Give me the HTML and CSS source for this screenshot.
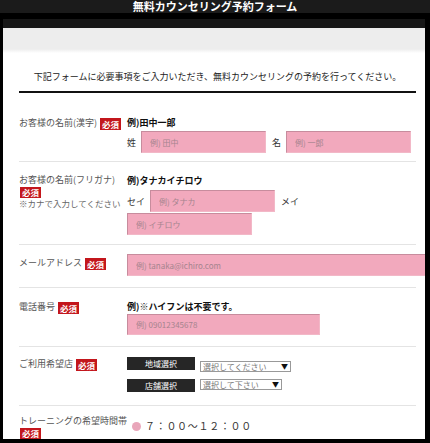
FILE: index.html
```html
<!DOCTYPE html>
<html lang="ja">
<head>
    <meta charset="UTF-8">
    <meta name="viewport" content="width=device-width, initial-scale=1.0">
    <title>無料カウンセリング予約フォーム</title>
    <link rel="stylesheet" href="styles.css">
</head>
<body>
    <div class="topbar">
        <h1>無料カウンセリング予約フォーム</h1>
    </div>

    <div class="frame">
        <div class="subbar"></div>
        <div class="panel">
            <div class="band"></div>
            <p class="intro">下記フォームに必要事項をご入力いただき、無料カウンセリングの予約を行ってください。</p>

            <form class="form" id="counseling-form">
                <!-- 名前(漢字) -->
                <div class="row row-name">
                    <div class="label">お客様の名前(漢字)<span class="req">必須</span></div>
                    <div class="field">
                        <p class="example">例)田中一郎</p>
                        <div class="inline">
                            <span class="unit">姓</span>
                            <input type="text" class="text name" placeholder="例) 田中">
                            <span class="unit unit-mei">名</span>
                            <input type="text" class="text name" placeholder="例) 一郎">
                        </div>
                    </div>
                </div>

                <!-- 名前(フリガナ) -->
                <div class="row row-kana">
                    <div class="label">
                        <span class="line">お客様の名前(フリガナ)</span>
                        <span class="req req-block">必須</span>
                        <span class="line note">※カナで入力してください</span>
                    </div>
                    <div class="field">
                        <p class="example">例)タナカイチロウ</p>
                        <div class="inline wrap">
                            <span class="unit">セイ</span>
                            <input type="text" class="text name" placeholder="例) タナカ">
                            <span class="unit unit-mei">メイ</span>
                            <input type="text" class="text name" placeholder="例) イチロウ">
                        </div>
                    </div>
                </div>

                <!-- メール -->
                <div class="row row-mail">
                    <div class="label label-mid">メールアドレス<span class="req">必須</span></div>
                    <div class="field">
                        <input type="text" class="text mail" placeholder="例) tanaka@ichiro.com">
                    </div>
                </div>

                <!-- 電話 -->
                <div class="row row-tel">
                    <div class="label">電話番号<span class="req">必須</span></div>
                    <div class="field">
                        <p class="example">例)※ハイフンは不要です。</p>
                        <input type="text" class="text tel" placeholder="例) 09012345678">
                    </div>
                </div>

                <!-- 店舗 -->
                <div class="row row-shop">
                    <div class="label">ご利用希望店<span class="req">必須</span></div>
                    <div class="field">
                        <div class="pick">
                            <span class="btn">地域選択</span>
                            <span class="select select-area">選択してください<span class="arrow">▼</span></span>
                        </div>
                        <div class="pick">
                            <span class="btn">店舗選択</span>
                            <span class="select select-shop">選択して下さい<span class="arrow">▼</span></span>
                        </div>
                    </div>
                </div>

                <!-- 時間帯 -->
                <div class="row row-time">
                    <div class="label">
                        <span class="line">トレーニングの希望時間帯</span>
                        <span class="req req-block">必須</span>
                    </div>
                    <div class="field">
                        <label class="option"><span class="radio"></span>７：００～１２：００</label>
                        <label class="option"><span class="radio"></span>１３：００～１８：００</label>
                    </div>
                </div>
            </form>
        </div>
    </div>
</body>
</html>
```

FILE: styles.css
```css
/* base */
body {
    margin: 0;
    background-color: #000;
    font-family: "Noto Sans CJK JP", "Noto Sans", sans-serif;
    color: #555;
}

p {
    margin: 0;
}

.topbar {
    height: 13px;
    background-color: #1b1b1b;
    overflow: hidden;
}

.topbar h1 {
    margin: 0;
    font-size: 11px;
    line-height: 13px;
    font-weight: bold;
    color: #fff;
    text-align: center;
}

.frame {
    padding: 6px 5px 4px 3px;
}

.subbar {
    height: 9px;
    background-color: #171717;
}

.panel {
    height: 411px;
    padding: 0 9px 0 16px;
    background-color: #fff;
    overflow: hidden;
}

.band {
    height: 25px;
    margin: 0 -9px 0 -16px;
    background: linear-gradient(#ededed 21px, #fff 25px);
}

.intro {
    margin: 17px 0 7px;
    font-size: 9px;
    line-height: 14px;
    color: #222;
    text-align: center;
}

.form {
    border-top: 2px solid #111;
}

/* rows */
.row {
    display: grid;
    grid-template-columns: 108px 1fr;
    border-bottom: 1px solid #e4e4e4;
}

.row-name {
    padding: 23px 0 8px;
}

.row-kana {
    padding: 12px 0 9px;
}

.row-mail {
    padding: 9px 0 11px;
}

.row-tel {
    padding: 12px 0 11px;
}

.row-shop {
    padding: 10px 0 13px;
}

.row-time {
    padding: 9px 0 0;
    border-bottom: none;
}

.label {
    font-size: 9px;
    line-height: 14px;
    white-space: nowrap;
}

.label-mid {
    padding-top: 2px;
}

.label .line {
    display: block;
    line-height: 12px;
}

.label .note {
    font-size: 8.5px;
    line-height: 11px;
    color: #666;
}

.req {
    display: inline-block;
    margin-left: 3px;
    padding: 0 2px;
    height: 12px;
    font-size: 8.5px;
    line-height: 12px;
    font-weight: bold;
    color: #fff;
    background-color: #c3161c;
    vertical-align: middle;
}

.req-block {
    display: block;
    width: fit-content;
    height: 11px;
    line-height: 11px;
    margin: 1px 0 0 1px;
}

.field {
    min-width: 0;
}

.example {
    font-size: 9px;
    line-height: 14px;
    font-weight: bold;
    color: #111;
}

.inline {
    display: flex;
    align-items: center;
    margin-top: 1px;
}

.wrap {
    flex-wrap: wrap;
    row-gap: 1px;
    margin-top: 2px;
}

.unit {
    font-size: 9px;
    color: #333;
    margin-right: 5px;
}

.unit-mei {
    margin-left: 6px;
}

/* inputs */
.text {
    box-sizing: border-box;
    height: 22px;
    padding: 0 8px;
    font-family: inherit;
    font-size: 8px;
    color: #333;
    background-color: #f2a9bd;
    border: 1px solid;
    border-color: #c78c9d #f2b8c7 #f2b8c7 #c78c9d;
    outline: none;
}

.text::placeholder {
    color: #a5848e;
}

.name {
    width: 125px;
}

.mail {
    display: block;
    width: 320px;
}

.tel {
    display: block;
    width: 193px;
    height: 21px;
}

/* shop select */
.pick {
    display: flex;
    align-items: flex-start;
    gap: 5px;
}

.pick + .pick {
    margin-top: 7px;
}

.btn {
    width: 68px;
    height: 13px;
    font-size: 8px;
    line-height: 13px;
    color: #fff;
    text-align: center;
    background-color: #262626;
}

.select {
    box-sizing: border-box;
    display: flex;
    justify-content: space-between;
    align-items: center;
    height: 11px;
    padding: 0 2px;
    font-size: 8px;
    line-height: 9px;
    color: #777;
    border: 1px solid #999;
    background-color: #fff;
}

.select-area {
    width: 91px;
    margin-top: 4px;
}

.select-shop {
    width: 82px;
}

.arrow {
    font-size: 7px;
    color: #111;
}

/* time */
.option {
    display: flex;
    align-items: center;
    gap: 4px;
    padding-left: 5px;
    margin-top: 4px;
    font-size: 10px;
    line-height: 14px;
    letter-spacing: 0.7px;
    color: #333;
}

.option + .option {
    margin-top: 6px;
}

.radio {
    width: 9px;
    height: 9px;
    border-radius: 50%;
    background-color: #e9a6ba;
}
```
